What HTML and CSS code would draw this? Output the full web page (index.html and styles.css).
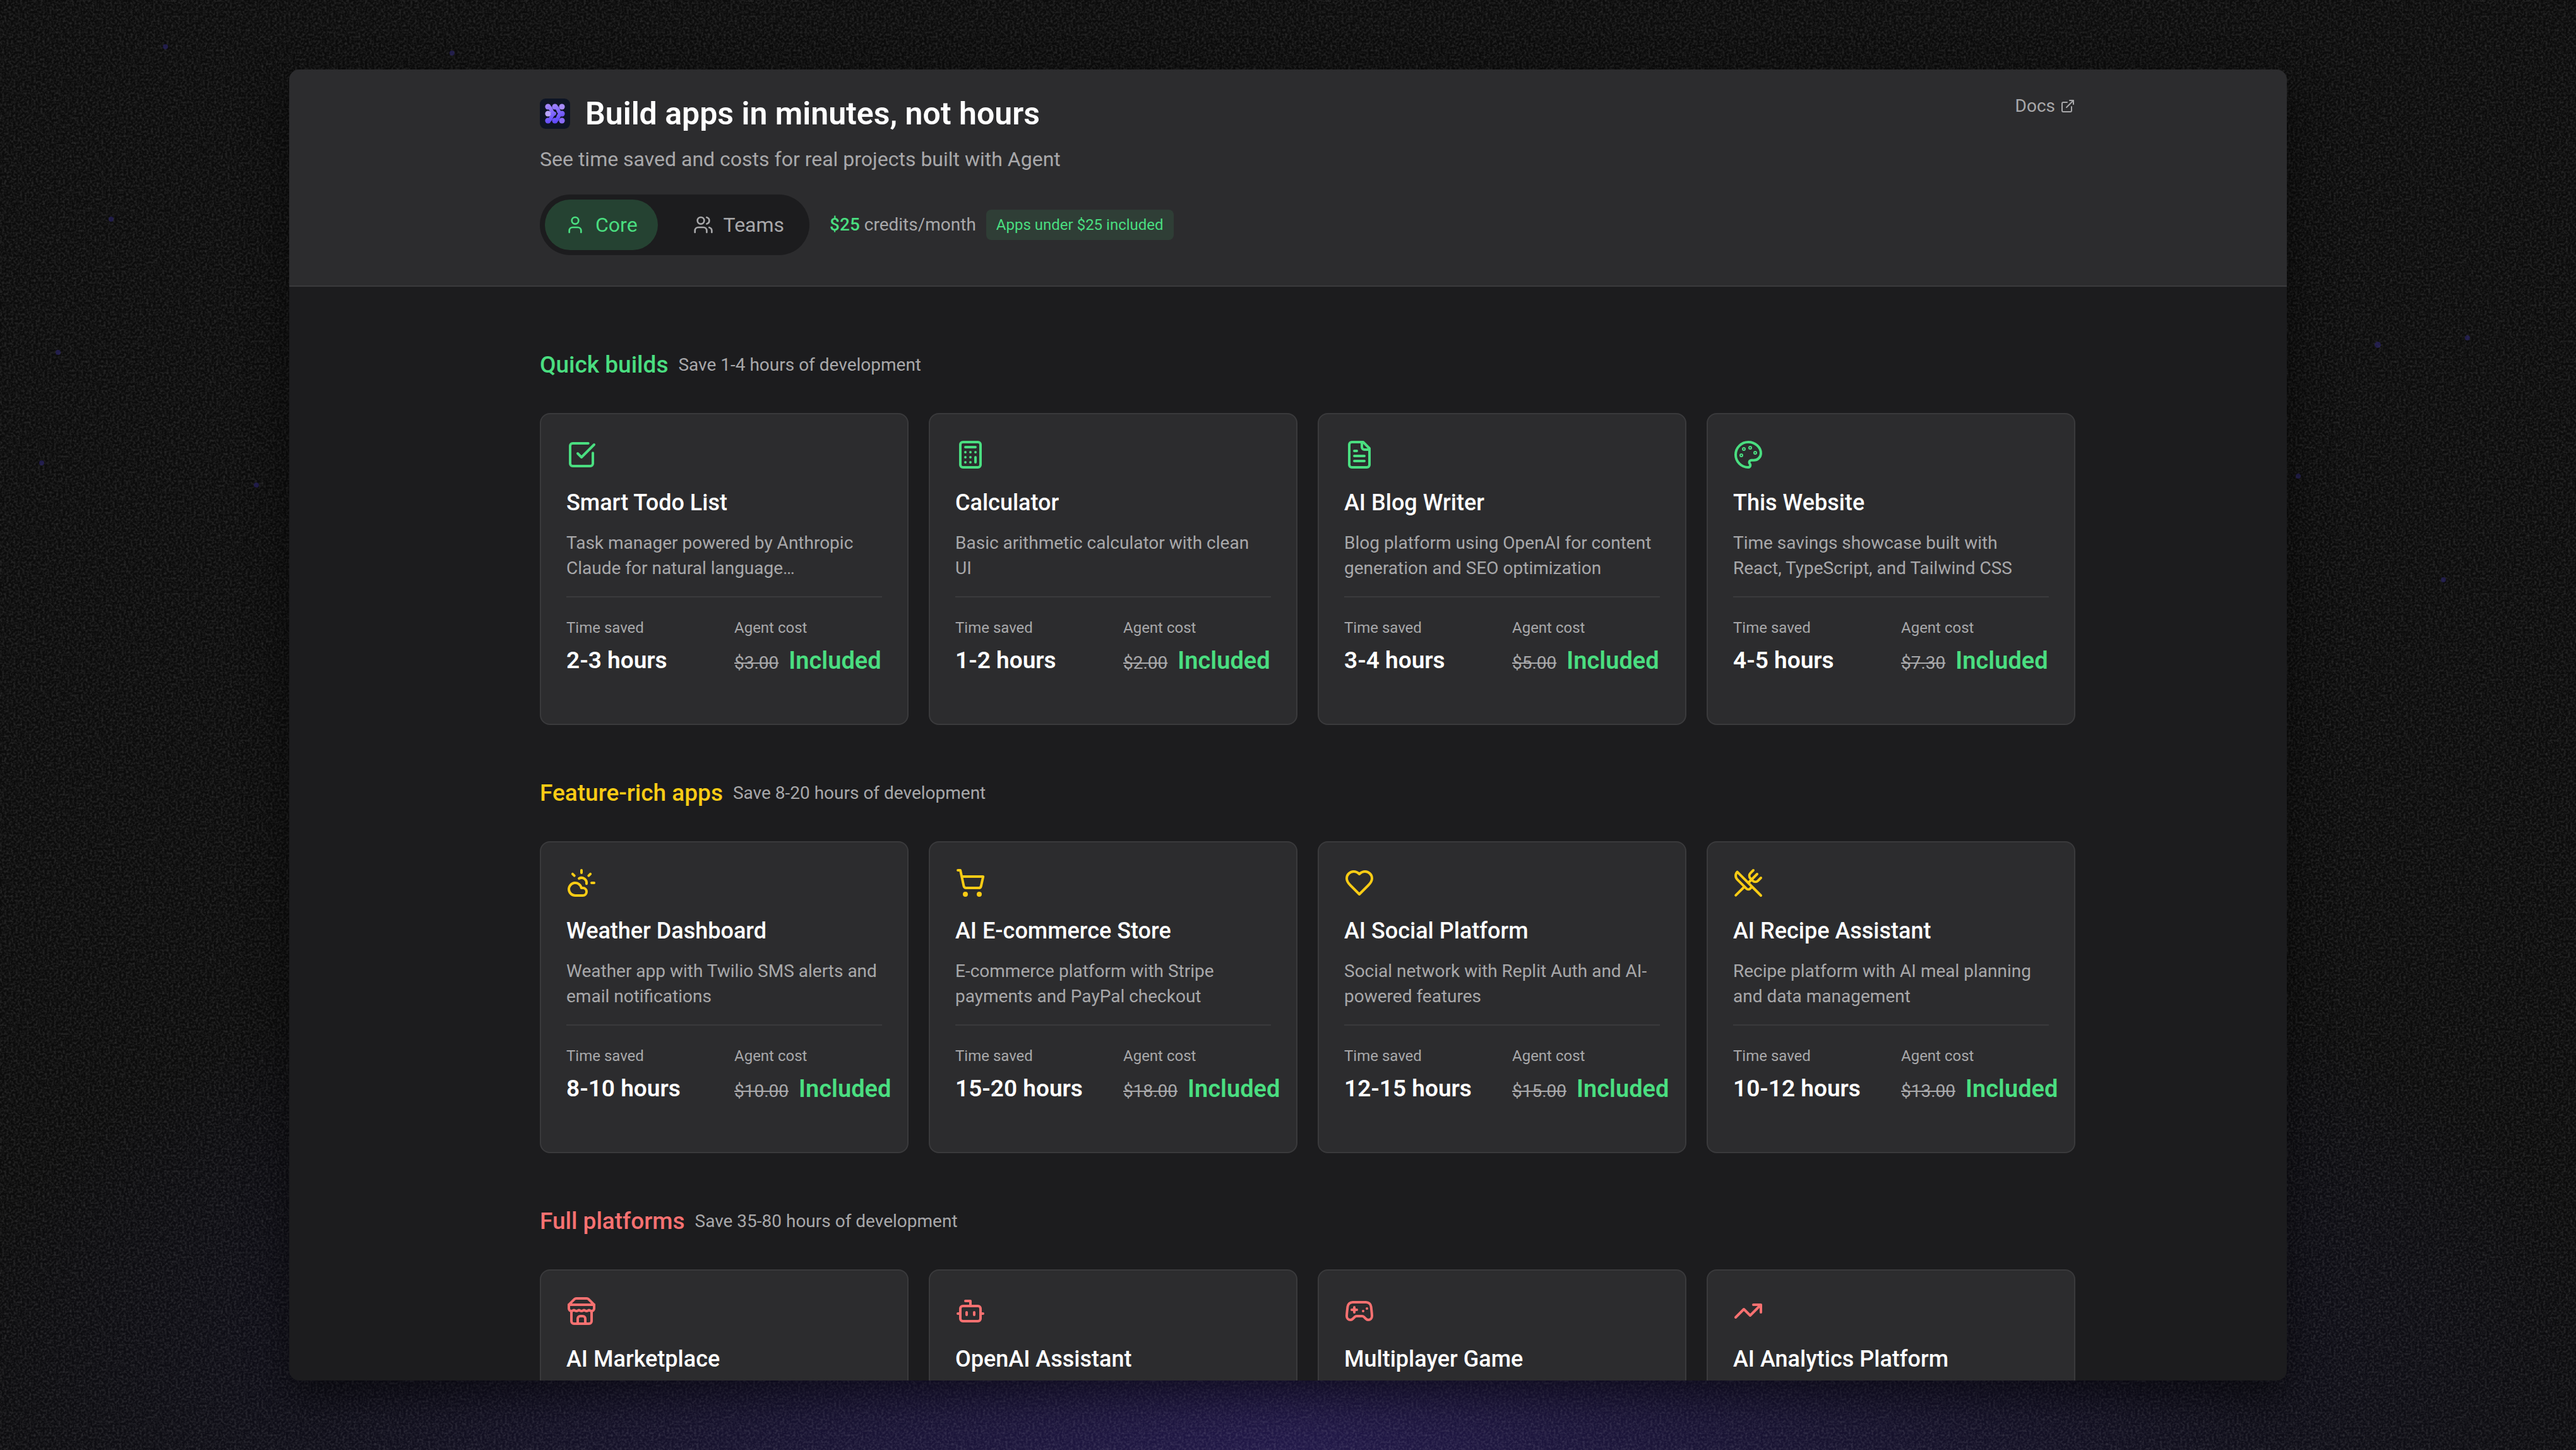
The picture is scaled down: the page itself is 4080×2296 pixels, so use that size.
FILE: index.html
```html
<!doctype html>
<html lang="en">
<head>
<meta charset="utf-8">
<title>Build apps in minutes, not hours</title>
<meta name="viewport" content="width=device-width,initial-scale=1">
<link rel="stylesheet" href="styles.css">
</head>
<body>

<!-- grain and stars behind the window -->
<svg class="backdrop" aria-hidden="true">
  <filter id="grain" x="0" y="0" width="100%" height="100%">
    <feTurbulence type="fractalNoise" baseFrequency=".28" numOctaves="2" seed="4"/>
    <feColorMatrix values="0 0 0 0 1  0 0 0 0 1  0 0 0 0 1  .26 0 0 0 -.1"/>
  </filter>
  <rect width="100%" height="100%" filter="url(#grain)"/>
  <g class="stars">
    <circle cx="262" cy="74" r="4"/><circle cx="176" cy="347" r="4"/><circle cx="92" cy="558" r="4"/>
    <circle cx="66" cy="733" r="4"/><circle cx="406" cy="768" r="4"/><circle cx="3766" cy="546" r="5"/>
    <circle cx="3908" cy="535" r="4"/><circle cx="3640" cy="754" r="4"/><circle cx="3870" cy="918" r="4"/>
    <circle cx="716" cy="84" r="4"/>
  </g>
</svg>

<div class="window">
  <header class="header">
    <div class="container header-row">
      <div>
        <div class="brand">
          <svg class="logo" viewBox="0 0 48 48" aria-hidden="true">
            <defs>
              <linearGradient id="violet" gradientUnits="userSpaceOnUse" x1="13" y1="8" x2="24" y2="40">
                <stop offset="0" stop-color="#a78bfa"/><stop offset="1" stop-color="#5b45ff"/>
              </linearGradient>
            </defs>
            <rect width="48" height="48" rx="9" fill="#0e1525"/>
            <g fill="url(#violet)">
              <circle cx="13" cy="13" r="4.6"/><circle cx="13" cy="35" r="4.6"/>
              <circle cx="24" cy="13" r="4.6"/><circle cx="24" cy="35" r="4.6"/><circle cx="35" cy="24" r="4.6"/>
            </g>
            <g fill="none" stroke="url(#violet)" stroke-width="6" stroke-linejoin="round">
              <path d="M13 13C20 14 16 22 23 24C16 26 20 34 13 35"/>
              <path d="M24 13C31 14 27 22 34 24C27 26 31 34 24 35"/>
            </g>
            <circle cx="13" cy="24" r="4.6" fill="#b8a4ff"/>
            <circle cx="35" cy="13" r="4.6" fill="#a78bfa"/>
            <circle cx="35" cy="35" r="4.6" fill="#8b6cf8"/>
          </svg>
          <h1>Build apps in minutes, not hours</h1>
        </div>
        <p class="tagline">See time saved and costs for real projects built with Agent</p>
        <div class="plan-row">
          <div class="toggle">
            <button class="active" type="button">
              <svg class="icon" viewBox="0 0 24 24"><path d="M19 21v-2a4 4 0 0 0-4-4H9a4 4 0 0 0-4 4v2"/><circle cx="12" cy="7" r="4"/></svg>
              Core
            </button>
            <button type="button">
              <svg class="icon" viewBox="0 0 24 24"><path d="M16 21v-2a4 4 0 0 0-4-4H6a4 4 0 0 0-4 4v2"/><circle cx="9" cy="7" r="4"/><path d="M22 21v-2a4 4 0 0 0-3-3.87M16 3.13a4 4 0 0 1 0 7.75"/></svg>
              Teams
            </button>
          </div>
          <div class="credits">
            <span><strong>$25</strong> credits/month</span>
            <span class="chip">Apps under $25 included</span>
          </div>
        </div>
      </div>
      <a class="docs" href="#">Docs
        <svg class="icon" viewBox="0 0 24 24"><path d="M15 3h6v6M10 14 21 3M18 13v6a2 2 0 0 1-2 2H5a2 2 0 0 1-2-2V8a2 2 0 0 1 2-2h6"/></svg>
      </a>
    </div>
  </header>

  <main class="container main">
    <section class="quick">
      <div class="section-head"><h2>Quick builds</h2><p>Save 1-4 hours of development</p></div>
      <div class="grid">
        <article class="card">
          <svg class="icon" viewBox="0 0 24 24"><path d="M21 10.656V19a2 2 0 0 1-2 2H5a2 2 0 0 1-2-2V5a2 2 0 0 1 2-2h12.344M9 11l3 3L22 4"/></svg>
          <h3>Smart Todo List</h3>
          <p class="desc">Task manager powered by Anthropic Claude for natural language…</p>
          <dl class="stats">
            <div><dt>Time saved</dt><dd>2-3 hours</dd></div>
            <div><dt>Agent cost</dt><dd class="cost"><s>$3.00</s><span>Included</span></dd></div>
          </dl>
        </article>
        <article class="card">
          <svg class="icon" viewBox="0 0 24 24"><rect x="4" y="2" width="16" height="20" rx="2"/><path d="M8 6h8M16 14v4M16 10h.01M12 10h.01M8 10h.01M12 14h.01M8 14h.01M12 18h.01M8 18h.01"/></svg>
          <h3>Calculator</h3>
          <p class="desc">Basic arithmetic calculator with clean<br>UI</p>
          <dl class="stats">
            <div><dt>Time saved</dt><dd>1-2 hours</dd></div>
            <div><dt>Agent cost</dt><dd class="cost"><s>$2.00</s><span>Included</span></dd></div>
          </dl>
        </article>
        <article class="card">
          <svg class="icon" viewBox="0 0 24 24"><path d="M15 2H6a2 2 0 0 0-2 2v16a2 2 0 0 0 2 2h12a2 2 0 0 0 2-2V7Z"/><path d="M14 2v4a2 2 0 0 0 2 2h4M10 9H8M16 13H8M16 17H8"/></svg>
          <h3>AI Blog Writer</h3>
          <p class="desc">Blog platform using OpenAI for content generation and SEO optimization</p>
          <dl class="stats">
            <div><dt>Time saved</dt><dd>3-4 hours</dd></div>
            <div><dt>Agent cost</dt><dd class="cost"><s>$5.00</s><span>Included</span></dd></div>
          </dl>
        </article>
        <article class="card">
          <svg class="icon" viewBox="0 0 24 24"><circle cx="13.5" cy="6.5" r=".5"/><circle cx="17.5" cy="10.5" r=".5"/><circle cx="8.5" cy="7.5" r=".5"/><circle cx="6.5" cy="12.5" r=".5"/><path d="M12 2C6.5 2 2 6.5 2 12s4.5 10 10 10c.926 0 1.648-.746 1.648-1.688 0-.437-.18-.835-.437-1.125-.29-.289-.438-.652-.438-1.125a1.64 1.64 0 0 1 1.668-1.668h1.996c3.051 0 5.555-2.503 5.555-5.554C21.965 6.012 17.461 2 12 2z"/></svg>
          <h3>This Website</h3>
          <p class="desc">Time savings showcase built with React, TypeScript, and Tailwind CSS</p>
          <dl class="stats">
            <div><dt>Time saved</dt><dd>4-5 hours</dd></div>
            <div><dt>Agent cost</dt><dd class="cost"><s>$7.30</s><span>Included</span></dd></div>
          </dl>
        </article>
      </div>
    </section>

    <section class="feature">
      <div class="section-head"><h2>Feature-rich apps</h2><p>Save 8-20 hours of development</p></div>
      <div class="grid">
        <article class="card">
          <svg class="icon" viewBox="0 0 24 24"><path d="M12 2v2M4.93 4.93l1.41 1.41M20 12h2M19.07 4.93l-1.41 1.41M15.947 12.65a4 4 0 0 0-5.925-4.128M13 22H7a5 5 0 1 1 4.9-6H13a3 3 0 0 1 0 6Z"/></svg>
          <h3>Weather Dashboard</h3>
          <p class="desc">Weather app with Twilio SMS alerts and email notifications</p>
          <dl class="stats">
            <div><dt>Time saved</dt><dd>8-10 hours</dd></div>
            <div><dt>Agent cost</dt><dd class="cost"><s>$10.00</s><span>Included</span></dd></div>
          </dl>
        </article>
        <article class="card">
          <svg class="icon" viewBox="0 0 24 24"><circle cx="8" cy="21" r="1"/><circle cx="19" cy="21" r="1"/><path d="M2.05 2.05h2l2.66 12.42a2 2 0 0 0 2 1.58h9.78a2 2 0 0 0 1.95-1.57l1.65-7.43H5.12"/></svg>
          <h3>AI E-commerce Store</h3>
          <p class="desc">E-commerce platform with Stripe payments and PayPal checkout</p>
          <dl class="stats">
            <div><dt>Time saved</dt><dd>15-20 hours</dd></div>
            <div><dt>Agent cost</dt><dd class="cost"><s>$18.00</s><span>Included</span></dd></div>
          </dl>
        </article>
        <article class="card">
          <svg class="icon" viewBox="0 0 24 24"><path d="M19 14c1.49-1.46 3-3.21 3-5.5A5.5 5.5 0 0 0 16.5 3c-1.76 0-3 .5-4.5 2-1.5-1.5-2.74-2-4.5-2A5.5 5.5 0 0 0 2 8.500c0 2.3 1.5 4.05 3 5.5l7 7Z"/></svg>
          <h3>AI Social Platform</h3>
          <p class="desc">Social network with Replit Auth and AI-powered features</p>
          <dl class="stats">
            <div><dt>Time saved</dt><dd>12-15 hours</dd></div>
            <div><dt>Agent cost</dt><dd class="cost"><s>$15.00</s><span>Included</span></dd></div>
          </dl>
        </article>
        <article class="card">
          <svg class="icon" viewBox="0 0 24 24"><path d="m16 2-2.3 2.3a3 3 0 0 0 0 4.2l1.8 1.8a3 3 0 0 0 4.2 0L22 8"/><path d="M15 15 3.3 3.3a4.2 4.2 0 0 0 0 6l7.3 7.3c.7.7 2 .7 2.8 0L15 15Zm0 0 7 7M2.1 21.8l6.4-6.3M19 5l-7 7"/></svg>
          <h3>AI Recipe Assistant</h3>
          <p class="desc">Recipe platform with AI meal planning and data management</p>
          <dl class="stats">
            <div><dt>Time saved</dt><dd>10-12 hours</dd></div>
            <div><dt>Agent cost</dt><dd class="cost"><s>$13.00</s><span>Included</span></dd></div>
          </dl>
        </article>
      </div>
    </section>

    <section class="full">
      <div class="section-head"><h2>Full platforms</h2><p>Save 35-80 hours of development</p></div>
      <div class="grid">
        <article class="card">
          <svg class="icon" viewBox="0 0 24 24"><path d="m2 7 4.41-4.41A2 2 0 0 1 7.83 2h8.34a2 2 0 0 1 1.42.59L22 7M4 12v8a2 2 0 0 0 2 2h12a2 2 0 0 0 2-2v-8M15 22v-4a2 2 0 0 0-2-2h-2a2 2 0 0 0-2 2v4M2 7h20"/><path d="M22 7v3a2 2 0 0 1-2 2a2.7 2.7 0 0 1-1.59-.63.7.7 0 0 0-.82 0A2.7 2.7 0 0 1 16 12a2.7 2.7 0 0 1-1.59-.63.7.7 0 0 0-.82 0A2.7 2.7 0 0 1 12 12a2.7 2.7 0 0 1-1.59-.63.7.7 0 0 0-.82 0A2.7 2.7 0 0 1 8 12a2.7 2.7 0 0 1-1.59-.63.7.7 0 0 0-.82 0A2.7 2.7 0 0 1 4 12a2 2 0 0 1-2-2V7"/></svg>
          <h3>AI Marketplace</h3>
        </article>
        <article class="card">
          <svg class="icon" viewBox="0 0 24 24"><path d="M12 8V4H8"/><rect x="4" y="8" width="16" height="12" rx="2"/><path d="M2 14h2M20 14h2M15 13v2M9 13v2"/></svg>
          <h3>OpenAI Assistant</h3>
        </article>
        <article class="card">
          <svg class="icon" viewBox="0 0 24 24"><path d="M6 11h4M8 9v4M15 12h.01M18 10h.01"/><path d="M17.32 5H6.68a4 4 0 0 0-3.978 3.59c-.006.052-.01.101-.017.152C2.604 9.416 2 14.456 2 16a3 3 0 0 0 3 3c1 0 1.5-.5 2-1l1.414-1.414A2 2 0 0 1 9.828 16h4.344a2 2 0 0 1 1.414.586L17 18c.5.5 1 1 2 1a3 3 0 0 0 3-3c0-1.545-.604-6.584-.685-7.258-.007-.05-.011-.1-.017-.151A4 4 0 0 0 17.32 5z"/></svg>
          <h3>Multiplayer Game</h3>
        </article>
        <article class="card">
          <svg class="icon" viewBox="0 0 24 24"><path d="M22 7l-8.5 8.5-5-5L2 17M16 7h6v6"/></svg>
          <h3>AI Analytics Platform</h3>
        </article>
      </div>
    </section>
  </main>
</div>

</body>
</html>
```
FILE: styles.css
```css
:root{
  --bg:#1c1c1e;
  --panel:#2c2c2e;
  --line:#3a3a3c;
  --muted:#a8a8aa;
  --green:#4ade80;
  --yellow:#facc15;
  --red:#f87171;
}
*{box-sizing:border-box;margin:0;padding:0}
body{
  height:100vh;
  padding:110px 24px;
  font-family:Roboto,"Liberation Sans",sans-serif;
  font-size:28px;
  line-height:40px;
  color:var(--muted);
  background:radial-gradient(ellipse 2200px 1000px at 50% 100%,#221949 0%,#191433 35%,#100f1a 70%,#0c0c0c 100%);
  overflow:hidden;
}

/* ---------- backdrop ---------- */
.backdrop{
  position:absolute;
  inset:0;
  width:100%;
  height:100%;
  z-index:-1;
}
.stars{fill:#2d2670;opacity:.6}

/* ---------- window ---------- */
.window{
  max-width:3164px;
  height:100%;
  margin:0 auto;
  border-radius:16px;
  background:var(--bg);
  box-shadow:0 24px 64px rgba(0,0,0,.5);
  overflow:hidden;
  padding-left:62px;
}
.container{
  max-width:2560px;
  margin:0 auto;
  padding:0 64px;
}
.icon{
  display:block;
  flex:none;
  width:32px;
  height:32px;
  fill:none;
  stroke:currentColor;
  stroke-width:2;
  stroke-linecap:round;
  stroke-linejoin:round;
}

/* ---------- header ---------- */
.header{
  margin-left:-62px;
  padding:38px 0 48px 62px;
  background:var(--panel);
  border-bottom:2px solid var(--line);
}
.header-row{
  display:flex;
  justify-content:space-between;
  align-items:flex-start;
}
.brand{display:flex;align-items:center;gap:24px}
.logo{width:48px;height:48px}
h1{font-size:50px;line-height:64px;font-weight:600;color:#fff}
.tagline{margin:16px 0 32px;font-size:32px;line-height:48px}
.plan-row{display:flex;align-items:center;gap:32px}
.toggle{
  display:flex;
  gap:24px;
  padding:8px;
  border-radius:48px;
  background:var(--bg);
}
.toggle button{
  display:flex;
  align-items:center;
  gap:16px;
  height:80px;
  padding:0 32px;
  border:none;
  border-radius:40px;
  background:none;
  color:inherit;
  font:inherit;
  font-size:32px;
  cursor:pointer;
}
.toggle .active{background:rgba(74,222,128,.2);color:var(--green)}
.credits{display:flex;align-items:center;gap:16px}
.credits strong{font-weight:500;color:var(--green)}
.chip{
  padding:4px 16px;
  border-radius:8px;
  background:rgba(74,222,128,.1);
  color:var(--green);
  font-size:24px;
}
.docs{display:flex;align-items:center;gap:8px;color:inherit;text-decoration:none}
.docs .icon{width:24px;height:24px}

/* ---------- sections ---------- */
.main{padding-top:96px}
section{margin-bottom:80px}
.section-head{display:flex;align-items:center;gap:16px;margin-bottom:48px}
h2{font-size:37px;line-height:56px;font-weight:500}
.quick h2,.quick .icon{color:var(--green)}
.feature h2,.feature .icon{color:var(--yellow)}
.full h2,.full .icon{color:var(--red)}
.grid{display:grid;grid-template-columns:repeat(4,1fr);gap:32px}

/* ---------- cards ---------- */
.card{
  min-width:0;
  padding:40px;
  border:2px solid var(--line);
  border-radius:16px;
  background:var(--panel);
}
.card .icon{width:48px;height:48px;margin-bottom:24px}
h3{font-size:36px;line-height:56px;font-weight:500;color:#fff}
.desc{margin:16px 0 24px}
.stats{
  display:grid;
  grid-template-columns:1fr 1fr;
  gap:32px;
  padding:32px 0;
  border-top:2px solid var(--line);
}
.stats div{min-width:0}
dt{margin-bottom:8px;font-size:24px;line-height:32px}
dd{font-size:37px;line-height:56px;font-weight:600;color:#fff;white-space:nowrap}
.cost{display:flex;align-items:baseline;gap:16px}
.cost s{font-size:28px;line-height:40px;font-weight:400;color:var(--muted)}
.cost span{font-size:38px;color:var(--green)}
```
